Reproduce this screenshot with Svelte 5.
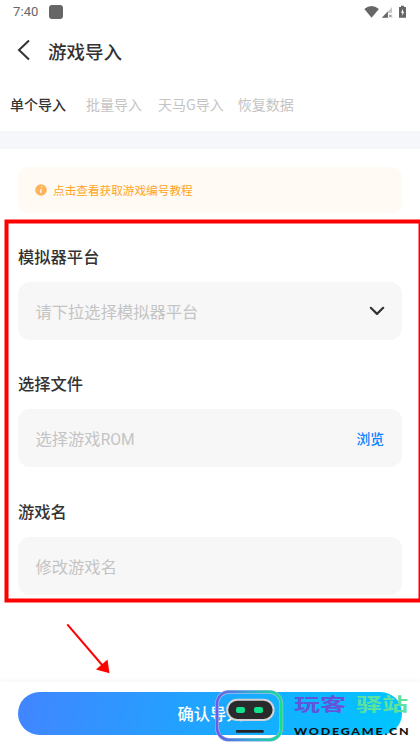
<script lang="ts">
	const tabs = ['单个导入', '批量导入', '天马G导入', '恢复数据'];
	let active = $state(0);
</script>

<div class="screen">
	<div class="status">
		<span class="time">7:40</span>
		<span class="app-dot"></span>
		<svg class="status-icons" width="44" height="14" viewBox="0 0 44 14" fill="#666">
			<path d="M0.3 4Q7.5-1.8 14.9 4L7.6 12.8Z" />
			<path d="M22.8 7.5L28 2V8H24V12.8H22.8Z" fill="#c9c9c9" />
			<path d="M17.8 12.8L23.8 6.5V12.8Z" />
			<path d="M25 9.6l2.8 2.8m0-2.8l-2.8 2.8" stroke="#666" stroke-width="0.9" />
			<path d="M37 0.8h3v1.2H42V12.8H35V2H37Z" />
			<path d="M39 3.8L37 7.8h1.3v3L40.2 6.8h-1.2Z" fill="#fff" />
		</svg>
	</div>

	<header>
		<svg width="13" height="22" viewBox="0 0 13 22" fill="none" stroke="#333" stroke-width="2">
			<path d="M12 1.5L2 11L12 20.5" />
		</svg>
		<h1>游戏导入</h1>
	</header>

	<nav>
		{#each tabs as tab, i}
			<button class="tab" class:active={active === i} onclick={() => (active = i)}>{tab}</button>
		{/each}
	</nav>

	<main>
		<div class="notice">
			<svg width="12" height="12" viewBox="0 0 12 12">
				<circle cx="6" cy="6" r="5.8" fill="#ffb45c" />
				<path d="M6.8 2.4L6.5 3.6M6.2 5L5.5 9" stroke="#fff" stroke-width="1.2" />
			</svg>
			<span>点击查看获取游戏编号教程</span>
		</div>

		<h2>模拟器平台</h2>
		<div class="field">
			<span>请下拉选择模拟器平台</span>
			<svg width="16" height="10" viewBox="0 0 16 10" fill="none" stroke="#333" stroke-width="2.2" stroke-linecap="round" stroke-linejoin="round">
				<path d="M1.8 1.8L8 7.9L14.2 1.8" />
			</svg>
		</div>

		<h2>选择文件</h2>
		<div class="field">
			<span>选择游戏<span class="latin">ROM</span></span>
			<button class="browse">浏览</button>
		</div>

		<h2>游戏名</h2>
		<div class="field">
			<span>修改游戏名</span>
		</div>
	</main>

	<footer>
		<button class="submit">确认导入</button>
	</footer>

	<!-- red frame and arrow pointing at the submit button -->
	<svg class="marks" width="420" height="746" viewBox="0 0 420 746">
		<rect x="6.5" y="221.5" width="414" height="379" fill="none" stroke="#f00" stroke-width="4" />
		<path d="M67.3 624.3L103 666" stroke="#f00" stroke-width="2" />
		<path d="M109.5 673.3L96 669.5L107.5 659.5Z" fill="#f00" />
	</svg>

	<div class="brand">
		<svg width="70" height="54" viewBox="0 0 70 54">
			<defs>
				<linearGradient id="ring" x1="0" x2="1">
					<stop offset="0" stop-color="#6a5be8" />
					<stop offset="0.5" stop-color="#36a6d8" />
					<stop offset="1" stop-color="#12e08a" />
				</linearGradient>
			</defs>
			<rect x="3" y="2.8" width="64.3" height="48" rx="12" fill="none" stroke="#a9bfe6" stroke-width="3.8" />
			<rect x="3" y="2.8" width="64.3" height="48" rx="12" fill="none" stroke="url(#ring)" stroke-width="2.6" />
			<rect x="13.2" y="10.8" width="46.4" height="20.2" rx="10" fill="#2a2a2c" stroke="#d4d4d6" stroke-width="2" />
			<rect x="22" y="18" width="9" height="6" rx="2.2" fill="#12e28c" />
			<rect x="40" y="18" width="9" height="6" rx="2.2" fill="#12e28c" />
			<rect x="21.8" y="41.1" width="28" height="2.6" rx="1.3" fill="#252528" />
		</svg>
		<div class="brand-text">
			<div class="brand-name"><span class="purple">玩客</span><span class="green">驿站</span></div>
			<div class="brand-url">WODEGAME.CN</div>
		</div>
	</div>
</div>

<style>
	:global(body) {
		margin: 0;
		background: #fff;
	}

	.screen {
		position: relative;
		display: flex;
		flex-direction: column;
		width: 420px;
		height: 746px;
		overflow: hidden;
		background: #fff;
		color: #333;
		font-family: "Noto Sans CJK SC", sans-serif;
	}

	button {
		padding: 0;
		border: none;
		background: none;
		font-family: inherit;
		cursor: pointer;
	}

	.status {
		display: flex;
		align-items: center;
		height: 23px;
		padding: 0 12px 0 13px;
	}

	.time {
		width: 36px;
		font: 13px/23px Roboto, sans-serif;
		letter-spacing: 0.1px;
		color: #666;
	}

	.app-dot {
		width: 14px;
		height: 14px;
		border-radius: 3px;
		background: #666;
	}

	.status-icons {
		margin-left: auto;
	}

	header {
		display: flex;
		align-items: center;
		gap: 18px;
		height: 54px;
		padding-left: 17px;
	}

	h1 {
		margin: 0;
		padding-top: 1px;
		font-size: 18.5px;
		font-weight: 500;
		line-height: 28px;
	}

	nav {
		display: flex;
		align-items: center;
		gap: 16px;
		height: 54px;
		padding-left: 10px;
		border-bottom: 18px solid #f6f7fb;
	}

	.tab {
		font-size: 14px;
		line-height: 20px;
		color: #c4c4c4;
		white-space: nowrap;
	}

	.tab.active {
		color: #333;
		font-weight: 500;
	}

	.tab:first-child {
		margin-right: 4px;
	}

	.tab:nth-child(3) {
		margin-right: -2px;
	}

	main {
		flex: 1;
		padding: 18px 18px 0;
	}

	.notice {
		display: flex;
		align-items: center;
		gap: 6px;
		height: 46px;
		padding-left: 17px;
		border-radius: 10px;
		background: #fffaf3;
		color: #ffa31f;
		font-size: 11.65px;
	}

	.notice span {
		padding-bottom: 2px;
	}

	h2 {
		margin: 0;
		padding-top: 31.4px;
		font-size: 16.3px;
		font-weight: 500;
		line-height: 24px;
	}

	.notice + h2 {
		padding-top: 31px;
	}

	.field {
		display: flex;
		align-items: center;
		justify-content: space-between;
		height: 58px;
		margin-top: 14px;
		padding: 0 17px 0 17.5px;
		border-radius: 12px;
		background: #f7f7f7;
		color: #c4c4c4;
		font-size: 16.3px;
	}

	.latin {
		font-family: Roboto, sans-serif;
		font-size: 15.6px;
	}

	.browse {
		padding-right: 1px;
		color: #0d82ff;
		font-size: 13.8px;
		font-weight: 500;
	}

	footer {
		height: 54px;
		padding: 10px 18px 0;
		box-shadow: 0 -1px 5px rgba(0, 0, 0, 0.05);
	}

	.submit {
		width: 100%;
		height: 43px;
		padding-bottom: 2px;
		border-radius: 22px;
		background: linear-gradient(100deg, #4285ff, #1aa9ff 55%, #00c6ff);
		color: #fff;
		font-size: 16.3px;
		font-weight: 500;
	}

	.marks {
		position: absolute;
		top: 0;
		left: 0;
		pointer-events: none;
	}

	.brand {
		position: absolute;
		top: 689px;
		left: 214px;
		display: flex;
		gap: 10px;
		pointer-events: none;
	}

	.brand-text {
		padding-top: 2px;
	}

	.brand-name {
		display: flex;
		gap: 9px;
		height: 24px;
		font-size: 18px;
		font-weight: 700;
		line-height: 24px;
	}

	.brand-name span {
		margin-right: 17px;
		transform: scaleX(1.45);
		transform-origin: left;
	}

	.purple {
		color: #6355db;
	}

	.green {
		color: #5ee0a0;
	}

	.brand-url {
		margin-top: 9px;
		color: #111;
		font: 900 10px/14px Lato, sans-serif;
		letter-spacing: 1.4px;
		transform: scaleX(1.25);
		transform-origin: left;
	}
</style>
